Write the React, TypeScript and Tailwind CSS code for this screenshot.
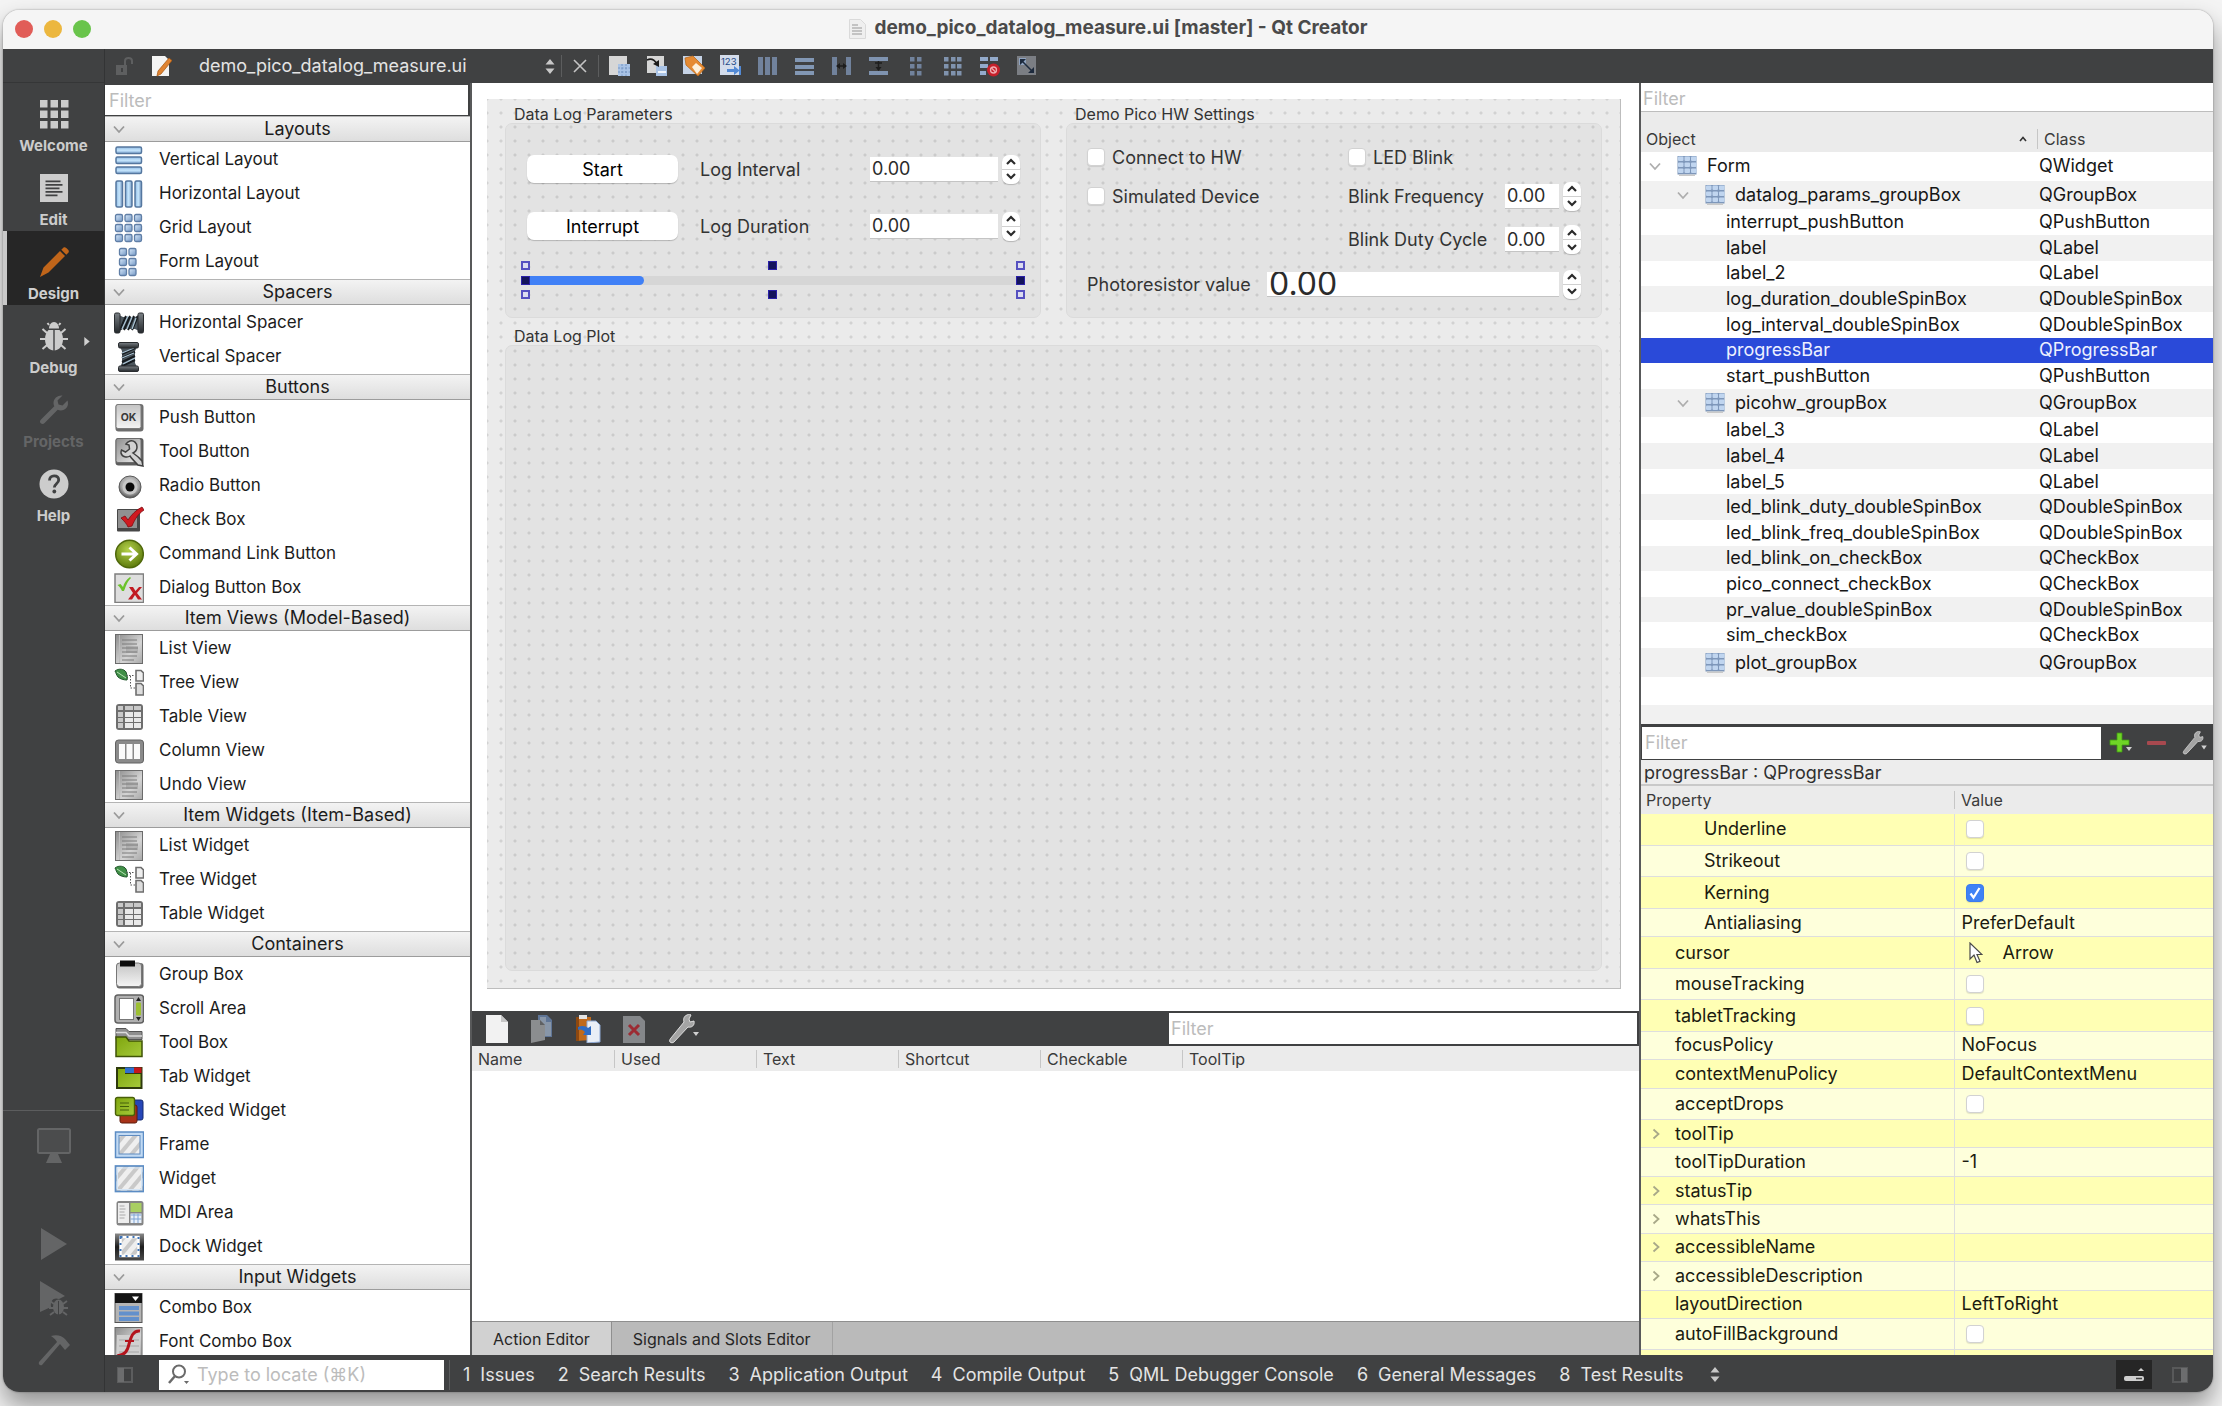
import React from "react";

/* ---------- shared gradients ---------- */

function Defs() {
  return (
    <svg width="0" height="0" className="absolute" aria-hidden="true">
      <defs>
        <linearGradient id="blueBar" x1="0" y1="0" x2="0" y2="1">
          <stop offset="0" stopColor="#8db8e2" />
          <stop offset="0.5" stopColor="#c6e6fd" />
          <stop offset="1" stopColor="#7fa6d0" />
        </linearGradient>
        <linearGradient id="blueCol" x1="0" y1="0" x2="1" y2="0">
          <stop offset="0" stopColor="#8db8e2" />
          <stop offset="0.5" stopColor="#c6e6fd" />
          <stop offset="1" stopColor="#7598c2" />
        </linearGradient>
        <linearGradient id="blueCell" x1="0" y1="0" x2="1" y2="1">
          <stop offset="0" stopColor="#d8e9fa" />
          <stop offset="1" stopColor="#7397c4" />
        </linearGradient>
        <linearGradient id="gray" x1="0" y1="0" x2="0" y2="1">
          <stop offset="0" stopColor="#c4c4c4" />
          <stop offset="1" stopColor="#f4f4f4" />
        </linearGradient>
        <linearGradient id="grayTool" x1="0" y1="0" x2="1" y2="1">
          <stop offset="0" stopColor="#8e8e8e" />
          <stop offset="1" stopColor="#f0f0f0" />
        </linearGradient>
        <linearGradient id="grayList" x1="0" y1="0" x2="1" y2="1">
          <stop offset="0" stopColor="#8c8c8c" />
          <stop offset="0.6" stopColor="#d4d4d4" />
          <stop offset="1" stopColor="#a8a8a8" />
        </linearGradient>
        <linearGradient id="dark" x1="0" y1="0" x2="0" y2="1">
          <stop offset="0" stopColor="#7a8085" />
          <stop offset="1" stopColor="#24282b" />
        </linearGradient>
        <linearGradient id="green" x1="0" y1="0" x2="1" y2="1">
          <stop offset="0" stopColor="#7fa60e" />
          <stop offset="1" stopColor="#a5c93a" />
        </linearGradient>
        <radialGradient id="greenBall" cx="0.45" cy="0.35" r="0.65">
          <stop offset="0" stopColor="#b4d24a" />
          <stop offset="1" stopColor="#5d7a0c" />
        </radialGradient>
        <radialGradient id="grayBall" cx="0.5" cy="0.4" r="0.6">
          <stop offset="0" stopColor="#e8e8e8" />
          <stop offset="0.7" stopColor="#a0a0a0" />
          <stop offset="1" stopColor="#4c4c4c" />
        </radialGradient>
        <linearGradient id="blackFade" x1="0" y1="0" x2="0" y2="1">
          <stop offset="0" stopColor="#8a8a8a" />
          <stop offset="0.5" stopColor="#1c1c1c" />
          <stop offset="1" stopColor="#4a4a4a" />
        </linearGradient>
        <pattern id="stripes" width="9" height="9" patternUnits="userSpaceOnUse" patternTransform="rotate(40)">
          <rect width="9" height="9" fill="#efefef" />
          <rect width="4" height="9" fill="#c9c9c9" />
        </pattern>
      </defs>
    </svg>
  );
}

const Svg30 = ({ children }: { children: React.ReactNode }) => (
  <svg viewBox="0 0 30 30" className="size-[30px] shrink-0" fill="none" aria-hidden="true">
    {children}
  </svg>
);

/* ---------- widget box icons ---------- */

const cells = (xs: number[], ys: number[], s: number) =>
  ys.flatMap((y) =>
    xs.map((x) => (
      <rect key={`${x}-${y}`} x={x} y={y} width={s} height={s} rx="1.5" fill="url(#blueCell)" stroke="#5f7ea6" strokeWidth="1.3" />
    )),
  );

const ListIcon = () => (
  <Svg30>
    <rect x="1.5" y="0.5" width="27" height="29" fill="url(#grayList)" stroke="#6b6b6b" />
    <path d="M5.5 1v28" stroke="#bdbdbd" />
    <path d="M8 6h15M8 10h15M8 14h16M8 18h15M8 22h15M8 26h12" stroke="#7a7a7a" strokeWidth="1" />
    <path d="M12 12h12v7H12z" fill="#7d7d7d" fillOpacity="0.35" />
  </Svg30>
);
const TreeIcon = () => (
  <Svg30>
    <path d="M1 3c4-3 9-2 11 1 1 3 2 6 1 8-3 0-7-1-9-3-1.500-2-2-4-3-6z" fill="#3f8f46" stroke="#20552a" />
    <path d="M3 4l9 6" stroke="#b7e3b4" />
    <path d="M12 7.500h9M16.500 8v12h5" stroke="#555" strokeDasharray="1.500 1.500" />
    <path d="M22 2.500h5l2.500 2.500v8H22z" fill="#eee" stroke="#6e6e6e" strokeWidth="1.600" />
    <path d="M22 15.500h5l2.500 2.500v9H22z" fill="#ddd" stroke="#6e6e6e" strokeWidth="1.600" />
  </Svg30>
);
const TableIcon = () => (
  <Svg30>
    <rect x="2" y="2" width="27" height="26" rx="3" fill="#6e6e6e" />
    <path d="M4 4h5v4H4zM11 4h8v4h-8zM20 4h7v4h-7z" fill="#c8c8c8" />
    <path d="M4 10h5v5H4zM4 16h5v4H4zM4 21h5v5H4z" fill="#c8c8c8" />
    <path d="M11 10h8v5h-8zM20 10h7v5h-7zM11 16h8v4h-8zM20 16h7v4h-7zM11 21h8v5h-8zM20 21h7v5h-7z" fill="#e9e9e9" />
  </Svg30>
);

const icons: Record<string, React.ReactElement> = {
  vlayout: (
    <Svg30>
      {[2, 12, 22].map((y) => (
        <rect key={y} x="2" y={y} width="25.500" height="6.500" rx="1.500" fill="url(#blueBar)" stroke="#55779f" strokeWidth="1.500" />
      ))}
    </Svg30>
  ),
  hlayout: (
    <Svg30>
      {[2, 11.5, 21].map((x) => (
        <rect key={x} x={x} y="2" width="6.500" height="26" rx="1.500" fill="url(#blueCol)" stroke="#55779f" strokeWidth="1.500" />
      ))}
    </Svg30>
  ),
  grid: <Svg30>{cells([1.5, 11, 20.5], [1.5, 11.5, 21.5], 7)}</Svg30>,
  form: <Svg30>{cells([5.5, 15], [1.5, 11.5, 21.5], 7)}</Svg30>,
  hspacer: (
    <Svg30>
      <path d="M5 7l4 2h12l4-2v16l-4-2H9l-4 2z" fill="#4b555c" />
      <path d="M6 22L12 8M10 22l6-14M14 22l6-14M18 22l6-14" stroke="#161b1f" strokeWidth="2" />
      <path d="M8 21l6-13M13 21l5-12M18 21l4-11" stroke="#a9c3d4" strokeWidth="1.300" />
      <rect x="0.500" y="5" width="5.500" height="20" rx="1.500" fill="url(#dark)" stroke="#2a2d30" />
      <rect x="24" y="5" width="5.500" height="20" rx="1.500" fill="url(#dark)" stroke="#2a2d30" />
    </Svg30>
  ),
  vspacer: (
    <Svg30>
      <path d="M6 5h17l-2 4v12l2 4H6l2-4V9z" fill="#4b555c" />
      <path d="M8 12l13-6M8 16l13-6M8 20l13-6M8 24l13-6" stroke="#161b1f" strokeWidth="2" />
      <path d="M8 11l12-5M8 16l12-5M9 22l12-6" stroke="#a9c3d4" strokeWidth="1.300" />
      <rect x="4.500" y="0.500" width="20" height="5.500" rx="1.500" fill="url(#dark)" stroke="#2a2d30" />
      <rect x="4.500" y="24" width="20" height="5.500" rx="1.500" fill="url(#dark)" stroke="#2a2d30" />
    </Svg30>
  ),
  push: (
    <Svg30>
      <rect x="1.500" y="1" width="28" height="27.500" rx="3" fill="#6d6d6d" />
      <rect x="2" y="1.500" width="25" height="24" rx="2" fill="url(#gray)" stroke="#7c7c7c" />
      <text x="14.500" y="17.500" textAnchor="middle" fontSize="10.500" fontWeight="700" fill="#3a3a3a" fontFamily="Inter, sans-serif">OK</text>
    </Svg30>
  ),
  tool: (
    <Svg30>
      <rect x="1.500" y="1" width="28" height="27.500" rx="3" fill="#5d5d5d" />
      <rect x="2" y="1.500" width="25" height="24" rx="2" fill="url(#grayTool)" stroke="#6c6c6c" />
      <path d="M16 4c4-1 7 2 7 6 0 3-2 5-4 6 3 2 6 4 9 8l1 5-5-1c-3-3-6-6-8-9-3 2-8 1-9-3 0-1 0-2 .5-3l4 2 4-3-.5-4-3-1c1-1.500 2-2.500 4-3z" fill="#d2d2d2" stroke="#404040" strokeWidth="1.500" />
    </Svg30>
  ),
  radio: (
    <Svg30>
      <circle cx="16" cy="16" r="11" fill="url(#grayBall)" stroke="#5a5a5a" />
      <circle cx="16" cy="16" r="7.500" fill="#c6c6c6" />
      <circle cx="16" cy="16" r="4.500" fill="#0a0a0a" />
    </Svg30>
  ),
  check: (
    <Svg30>
      <rect x="3" y="4" width="23" height="22.500" rx="1" fill="#474747" />
      <rect x="4" y="5" width="19" height="18" fill="#909090" />
      <path d="M7 13l4-2 3 4C17 10 22 5 28 2l2 3c-6 4-9 9-12 16l-4 1c-1-3-4-6-7-9z" fill="#cf1a20" stroke="#7d0a0f" strokeWidth="0.800" />
    </Svg30>
  ),
  command: (
    <Svg30>
      <circle cx="15.500" cy="15" r="13.800" fill="url(#greenBall)" stroke="#4f680b" strokeWidth="1.500" />
      <path d="M7.500 15h14M15.500 8.500l7 6.500-7 6.500" stroke="#fff" strokeWidth="3" />
    </Svg30>
  ),
  dialog: (
    <Svg30>
      <rect x="1" y="1" width="28.500" height="28.500" fill="#dedede" stroke="#7f7f7f" strokeWidth="1.500" />
      <path d="M3.500 12l3-1 2.500 3c1-4 3-7 7-10l1 1c-4 4-5 8-7 13H8c-1-2-2-4-4.500-6z" fill="#6cc22c" />
      <path d="M15 14h4l2.500 4L25 14h3l-5 6 5 6.500h-4L21 22l-3 4.500h-4l5-6.500z" fill="#c11a22" />
    </Svg30>
  ),
  list: <ListIcon />,
  tree: <TreeIcon />,
  table: <TableIcon />,
  column: (
    <Svg30>
      <rect x="1.500" y="4" width="28" height="23" rx="3" fill="#8a8a8a" stroke="#626262" />
      <path d="M5 8h6v15H5zM12.500 8h6v15h-6zM20 8h6v15h-6z" fill="#fbfbfb" />
    </Svg30>
  ),
  group: (
    <Svg30>
      <rect x="2.500" y="3" width="27" height="25.500" rx="3" fill="#6b6b6b" />
      <rect x="2.500" y="3" width="25" height="23.500" rx="3" fill="url(#gray)" stroke="#777" />
      <rect x="6" y="0.500" width="15" height="6" fill="#0c0c0c" />
    </Svg30>
  ),
  scroll: (
    <Svg30>
      <rect x="1" y="1" width="28.500" height="28" rx="3" fill="#b0b0b0" stroke="#606060" strokeWidth="1.500" />
      <rect x="5.500" y="4.500" width="14" height="21" fill="#fff" stroke="#777" />
      <rect x="22" y="8.500" width="5" height="13" rx="1" fill="#9dc032" />
      <path d="M24.500 3l2.500 4h-5zM24.500 27l2.500-4h-5z" fill="#222" />
    </Svg30>
  ),
  toolbox: (
    <Svg30>
      <path d="M2 0.500h10l3 3h13v8H2z" fill="#8f8f8f" stroke="#555" />
      <path d="M2 4.500h10l3 3.500h13" stroke="#dcdcdc" strokeWidth="1.500" />
      <path d="M2 9h10l3 4h13v15.500H2z" fill="url(#green)" stroke="#3f5307" strokeWidth="1.500" />
    </Svg30>
  ),
  tab: (
    <Svg30>
      <rect x="2" y="5" width="26.500" height="22" fill="#2e3a0c" />
      <rect x="11" y="5.500" width="9" height="5.500" fill="#2f6fcf" />
      <rect x="20" y="5.500" width="7.500" height="5.500" fill="#c4161c" />
      <path d="M4 7h7v5h15.500v13H4z" fill="url(#green)" />
    </Svg30>
  ),
  stacked: (
    <Svg30>
      <rect x="13" y="4" width="16" height="20" rx="2" fill="#2646b8" stroke="#152a70" />
      <rect x="6" y="9" width="17" height="18" rx="2" fill="#a83218" stroke="#5e1a0b" />
      <rect x="1.500" y="1.500" width="19" height="18" rx="2" fill="url(#green)" stroke="#485f08" strokeWidth="1.400" />
      <path d="M6 7h9M6 10.500h9M6 14h9" stroke="#44600a" />
    </Svg30>
  ),
  frame: (
    <Svg30>
      <rect x="1.500" y="2" width="28" height="25.500" fill="#c2daf3" stroke="#5b8cc4" strokeWidth="1.500" />
      <rect x="5" y="5.500" width="21" height="18.500" fill="url(#stripes)" stroke="#5f8bc0" />
    </Svg30>
  ),
  widget: (
    <Svg30>
      <rect x="1.500" y="2" width="28" height="25.500" fill="url(#stripes)" stroke="#5b8cc4" strokeWidth="1.700" />
      <rect x="3.500" y="4" width="24" height="21.500" stroke="#d6e6f6" />
    </Svg30>
  ),
  mdi: (
    <Svg30>
      <rect x="2.500" y="3" width="27" height="24.500" rx="2.500" fill="#858585" />
      <rect x="4" y="5" width="11" height="20" fill="#ededed" />
      <path d="M5.500 8h5M5.500 11h6M5.500 14h5M5.500 17h6M5.500 20h5" stroke="#aaa" />
      <rect x="16.500" y="5" width="11" height="9" fill="#a9cf62" />
      <rect x="16.500" y="15.500" width="11" height="9.500" fill="#e8f0fa" />
      <path d="M16.500 17h11M20 15.500V25M24 15.500V25M16.500 21h11" stroke="#7ea4d4" />
    </Svg30>
  ),
  dock: (
    <Svg30>
      <rect x="1" y="1.500" width="29" height="27" fill="url(#blackFade)" />
      <rect x="6.500" y="5" width="18" height="19" fill="url(#stripes)" stroke="#fff" strokeWidth="2.500" />
      <rect x="6.500" y="5" width="18" height="19" stroke="#3f74b8" strokeWidth="2" strokeDasharray="2 4" />
    </Svg30>
  ),
  combo: (
    <Svg30>
      <rect x="1" y="0.500" width="27" height="29" fill="#b4b4b4" stroke="#555" />
      <rect x="1" y="0.500" width="27" height="9.500" fill="#141414" />
      <path d="M18 3.500h7l-3.500 4.500z" fill="#fff" />
      <path d="M5 13h20v4H5zM5 18.500h20v4H5zM5 24h20v4H5z" fill="#6290cc" />
    </Svg30>
  ),
  fontcombo: (
    <Svg30>
      <rect x="1" y="0.500" width="27" height="31" fill="url(#grayList)" stroke="#666" />
      <path d="M3 8h23v22H3z" fill="#d0d0d0" />
      <path d="M5 13h20M5 19h20M5 25h20" stroke="#a6a6a6" />
      <path d="M26 4c-7-1-9 6-11 13-1.500 7-4 11-12 12" stroke="#b3141d" strokeWidth="3" />
      <path d="M11 14h9" stroke="#b3141d" strokeWidth="2" />
    </Svg30>
  ),
};

const categories: { title: string; items: [string, string][] }[] = [
  { title: "Layouts", items: [["vlayout", "Vertical Layout"], ["hlayout", "Horizontal Layout"], ["grid", "Grid Layout"], ["form", "Form Layout"]] },
  { title: "Spacers", items: [["hspacer", "Horizontal Spacer"], ["vspacer", "Vertical Spacer"]] },
  {
    title: "Buttons",
    items: [["push", "Push Button"], ["tool", "Tool Button"], ["radio", "Radio Button"], ["check", "Check Box"], ["command", "Command Link Button"], ["dialog", "Dialog Button Box"]],
  },
  { title: "Item Views (Model-Based)", items: [["list", "List View"], ["tree", "Tree View"], ["table", "Table View"], ["column", "Column View"], ["list", "Undo View"]] },
  { title: "Item Widgets (Item-Based)", items: [["list", "List Widget"], ["tree", "Tree Widget"], ["table", "Table Widget"]] },
  {
    title: "Containers",
    items: [
      ["group", "Group Box"], ["scroll", "Scroll Area"], ["toolbox", "Tool Box"], ["tab", "Tab Widget"], ["stacked", "Stacked Widget"],
      ["frame", "Frame"], ["widget", "Widget"], ["mdi", "MDI Area"], ["dock", "Dock Widget"],
    ],
  },
  { title: "Input Widgets", items: [["combo", "Combo Box"], ["fontcombo", "Font Combo Box"]] },
];

const Chevron = ({ right = false, color = "#a0a0a0" }: { right?: boolean; color?: string }) => (
  <svg viewBox="0 0 12 12" className="size-3 shrink-0" fill="none" stroke={color} strokeWidth="1.8" aria-hidden="true">
    <path d={right ? "M3.500 1.500l5 4.500-5 4.500" : "M1 3.500l5 5.500 5-5.500"} />
  </svg>
);

function WidgetBox() {
  return (
    <aside className="flex min-h-0 w-[367px] shrink-0 flex-col border-r-2 border-[#58595a] bg-white">
      <div className="shrink-0 border-b border-r-2 border-t-2 border-[#404142] bg-white pl-1">
        <input aria-label="Filter widgets" placeholder="Filter" className="h-[30px] w-full text-[18px] outline-none placeholder:text-[#bcbcbc]" />
      </div>
      <div className="min-h-0 flex-1 overflow-hidden">
        {categories.map((c) => (
          <section key={c.title}>
            <button className="flex h-[26px] w-full items-center border-b border-t border-b-[#9c9c9c] border-t-[#b4b4b4] bg-linear-to-b from-[#f3f3f3] to-[#dedede] pl-2 text-[18px] leading-none text-[#1c1c1c]">
              <Chevron color="#9a9a9a" />
              <span className="flex-1 text-center">{c.title}</span>
            </button>
            <ul className="pt-px">
              {c.items.map(([icon, label]) => (
                <li key={label}>
                  <button className="flex h-[34px] w-full items-center gap-[15px] pl-[9px] text-left text-[17px] text-[#1c1c1c]">
                    {icons[icon]}
                    {label}
                  </button>
                </li>
              ))}
            </ul>
          </section>
        ))}
      </div>
    </aside>
  );
}

/* ---------- mode selector ---------- */

const modeIcons: Record<string, React.ReactElement> = {
  Welcome: (
    <g>
      {[0, 10.5, 21].map((y) => [0, 10.5, 21].map((x) => <rect key={`${x}${y}`} x={x} y={y} width="7.500" height="7.500" />))}
    </g>
  ),
  Edit: (
    <path fillRule="evenodd" d="M0 0h28v28H0zM5.500 6.500v1.700h15V6.500zM5.500 10v1.700h17V10zM5.500 13.500v1.700h14v-1.700zM5.500 17v1.700h17V17zM5.500 20.500v1.700h12v-1.700z" />
  ),
  Design: (
    <path d="M20 3l5 5L8.500 24.500 0 29l3.500-9.500zM21.300 1.700l2-2c1-.8 2-.6 3 .3l1.800 1.800c.9 1 1 2 .2 3l-2 2z" />
  ),
  Debug: (
    <g>
      <path d="M9 6.500C9 3 11 0 14 0s5 3 5 6.500z" />
      <path d="M13.300 8v20.500C8 28 5 23 5 17c0-4 1.500-7 3.500-9zM14.700 8v20.500c5.300-.5 8.300-5.500 8.300-11.500 0-4-1.500-7-3.500-9z" />
      <path d="M7 11L2.500 7M21 11l4.500-4M5.500 17H0M22.500 17H28M7 23l-4.500 4M21 23l4.500 4M9 3L7.500 1M19 3l1.500-2" stroke="currentColor" strokeWidth="2" />
    </g>
  ),
  Projects: (
    <path d="M27.500 4.500l-5 5-4-1-1-4 5-5C18-1 13.500 2 13.500 7c0 1.200.3 2.300.8 3.300L1 23.500c-1.300 1.300-1.300 2.700-.2 3.800 1.200 1.200 2.600 1 3.800-.2L17.700 13.700C22.500 16 28 12.500 28 7.500c0-1-.1-2-.5-3z" />
  ),
  Help: (
    <g>
      <circle cx="14" cy="14" r="14.500" />
      <path d="M9.500 10.500c0-3 2-4.700 4.600-4.700 2.700 0 4.600 1.600 4.600 4.200 0 3.600-4.400 3.900-4.400 7.500" stroke="#404142" strokeWidth="2.800" fill="none" />
      <circle cx="14.300" cy="21.500" r="1.900" fill="#404142" />
    </g>
  ),
};

function ModeBar() {
  return (
    <nav className="flex w-[102px] shrink-0 flex-col border-r border-[#333435] bg-[#404142]">
      <div className="h-[34px] shrink-0 border-b border-[#353637]" />
      {Object.keys(modeIcons).map((m) => {
        const active = m === "Design";
        const off = m === "Projects";
        return (
          <button
            key={m}
            className={
              "relative flex h-[74px] shrink-0 flex-col items-center pt-[16px] text-[15px] font-bold leading-[18px] " +
              (active ? "border-l-4 border-[#c9c9c9] bg-[#262626] pr-1 text-[#cfcfcf]" : off ? "text-[#646566]" : "text-[#cccccc]")
            }
          >
            <svg viewBox="-1 -1 30 30" fill="currentColor" className={active ? "mb-2 size-[30px] text-[#c0651a]" : "mb-2 size-[30px]"} aria-hidden="true">
              {modeIcons[m]}
            </svg>
            {m}
            {m === "Debug" && (
              <svg viewBox="0 0 6 10" className="absolute right-[14px] top-8 h-[9px] w-[6px]" fill="#d0d0d0" aria-hidden="true">
                <path d="M0 0l6 5-6 5z" />
              </svg>
            )}
          </button>
        );
      })}
      <div className="flex-1" />
      <div className="flex h-[282px] shrink-0 flex-col items-center border-t border-[#5c5d5e] pt-[17px] text-[#646566]">
        <button aria-label="Select kit">
          <svg viewBox="0 0 34 35" className="h-[35px] w-[34px]" fill="none" aria-hidden="true">
            <rect x="1" y="1" width="32" height="24" rx="1.500" stroke="currentColor" strokeWidth="2" fill="#4b4c4d" />
            <path d="M13 26h8l4 9H9z" fill="currentColor" />
          </svg>
        </button>
        <button aria-label="Run" className="mt-[65px]">
          <svg viewBox="0 0 26 32" className="h-8 w-[26px]" fill="currentColor" aria-hidden="true">
            <path d="M0 0l26 16L0 32z" />
          </svg>
        </button>
        <button aria-label="Start debugging" className="mt-[21px]">
          <svg viewBox="0 0 28 35" className="h-[35px] w-7" fill="currentColor" aria-hidden="true">
            <path d="M0 0l25 15-6 3c-5-2-9 1-8 8L0 31z" />
            <ellipse cx="18.500" cy="26" rx="5.500" ry="7.500" />
            <path d="M18.500 20v14" stroke="#404142" />
            <path d="M10 20l4 3M27 20l-4 3M9 27h5M23 27h5M10 34l4-3M27 34l-4-3" stroke="currentColor" strokeWidth="1.800" />
          </svg>
        </button>
        <button aria-label="Build" className="mt-[18px]">
          <svg viewBox="0 0 32 32" className="size-8" fill="currentColor" aria-hidden="true">
            <path d="M13 2c6-2 11 0 14 3l5 6-5 5-5-6L4 31c-2 1-4-1-3-3L19 8c-1-2-3-4-6-6z" />
          </svg>
        </button>
      </div>
    </nav>
  );
}

/* ---------- top toolbar ---------- */

const Updown = () => (
  <svg viewBox="0 0 10 15" className="h-[15px] w-[10px]" fill="#c8c8c8" aria-hidden="true">
    <path d="M5 0l4.500 5.500h-9zM5 15l4.500-5.500h-9z" />
  </svg>
);

const squares = (xs: number[], ys: number[], w: number, h: number) =>
  ys.flatMap((y) => xs.map((x) => <rect key={`${x}-${y}`} x={x} y={y} width={w} height={h} />));

const toolIcons: [string, React.ReactElement][] = [
  [
    "Edit Widgets",
    <g key="a">
      <rect x="0" y="1" width="18" height="19" fill="#d6d6d6" />
      <rect x="9" y="9" width="12" height="12" fill="#a9c3e6" />
      <path d="M13 9v12M17 9v12M9 13h12M9 17h12" stroke="#7796c2" strokeDasharray="2 1.500" />
    </g>,
  ],
  [
    "Edit Signals/Slots",
    <g key="b">
      <rect x="1" y="1" width="17" height="17" fill="#d6d6d6" />
      <rect x="10" y="11" width="11" height="10" fill="#a9c3e6" />
      <path d="M12 17h8" stroke="#f0f5fc" strokeWidth="2" />
      <path d="M1 5c4-2 7-1 10 4" stroke="#1c1c1c" strokeWidth="1.500" />
      <path d="M13 5v7l-6-3z" fill="#1c1c1c" />
    </g>,
  ],
  [
    "Edit Buddies",
    <g key="c">
      <rect x="0" y="1" width="19" height="18" fill="#c6d3e6" />
      <path d="M2 3l8-2 12 12-7 8L3 10z" fill="#e58a33" stroke="#b8691c" strokeWidth="0.800" />
      <path d="M9 12l4-4 6 5-5 6z" fill="#fdf0dc" />
    </g>,
  ],
  [
    "Edit Tab Order",
    <g key="d">
      <rect x="0" y="0" width="19" height="20" fill="#d3dceb" />
      <text x="1" y="10" fontSize="9.500" fill="#254a86" fontFamily="Inter, sans-serif">123</text>
      <path d="M7 14h7v-3l5 4v-4h2v9h-2v-4l-5 4v-3H7z" fill="#5289d4" />
    </g>,
  ],
  ["Lay Out Horizontally", <g key="e" fill="#71829c">{squares([1, 8, 15], [2], 5, 18)}</g>],
  ["Lay Out Vertically", <g key="f" fill="#8297b4">{squares([1], [3, 10, 16], 19, 4)}</g>],
  [
    "Horizontal Splitter",
    <g key="g">
      <path d="M1 2h5v18H1zM15 2h5v18h-5z" fill="#71829c" />
      <path d="M6 11h9" stroke="#1d1d1d" strokeWidth="1.500" />
      <path d="M5 11l4-3v6zM16 11l-4-3v6z" fill="#1d1d1d" />
    </g>,
  ],
  [
    "Vertical Splitter",
    <g key="h">
      <path d="M1 2h19v4H1zM1 16h19v4H1z" fill="#7f93b0" />
      <path d="M10.500 6v9M7 8h7" stroke="#1d1d1d" strokeWidth="1.500" />
      <path d="M10.500 16l-3-4h6z" fill="#1d1d1d" />
    </g>,
  ],
  ["Form Layout", <g key="i" fill="#71829c">{squares([5, 12], [2, 9, 16], 4.5, 4.5)}</g>],
  ["Grid Layout", <g key="j" fill="#8093ae">{squares([2, 9, 15], [2, 9, 16], 4.5, 4.5)}</g>],
  [
    "Break Layout",
    <g key="k">
      <path d="M1 2h8v4H1zM11 2h8v4h-8zM1 9h8v4H1zM1 16h6v4H1z" fill="#93aacb" />
      <circle cx="14.500" cy="15" r="6.500" fill="#c5202b" />
      <circle cx="14.500" cy="15" r="3" stroke="#f0aab0" strokeWidth="1.300" />
      <path d="M12.500 13l4 4" stroke="#f0aab0" strokeWidth="1.300" />
    </g>,
  ],
  [
    "Adjust Size",
    <g key="l">
      <rect x="1" y="1" width="19" height="19" fill="#7b7e84" />
      <rect x="3" y="3" width="7" height="7" fill="#8fa3c0" />
      <path d="M6 6l10 10" stroke="#1d2a3d" strokeWidth="1.500" />
      <path d="M4 4h6l-6 6zM18 18h-6l6-6z" fill="#1d2a3d" />
    </g>,
  ],
];

function TopToolbar() {
  return (
    <div className="flex h-[34px] shrink-0 items-center bg-[#404142]">
      <div className="flex w-[456px] shrink-0 items-center pl-[11px]">
        <svg viewBox="0 0 18 20" className="h-5 w-[18px]" fill="none" aria-hidden="true">
          <rect x="0" y="9" width="11" height="10" fill="#5e5f60" />
          <path d="M9 9V5c0-4 7-4 7 0v3" stroke="#5e5f60" strokeWidth="2" />
          <rect x="5" y="12" width="2" height="4" fill="#404142" />
        </svg>
        <svg viewBox="0 0 20 22" className="ml-[18px] h-[22px] w-5" aria-hidden="true">
          <path d="M0 1h13l4 4v16H0z" fill="#f4f4f4" />
          <path d="M17 3l3 2.500L9 19l-4 2 1-5z" fill="#e08432" stroke="#a3540f" strokeWidth="0.700" />
        </svg>
        <button className="ml-[27px] flex flex-1 items-center justify-between pr-1.5 text-[18px] leading-6 text-[#e4e4e4]">
          demo_pico_datalog_measure.ui
          <Updown />
        </button>
      </div>
      <div className="h-[22px] w-px bg-[#5c5d5e]" />
      <button aria-label="Close document" className="mx-[11px]">
        <svg viewBox="0 0 14 14" className="size-[14px]" stroke="#c4c4c4" strokeWidth="1.600" aria-hidden="true">
          <path d="M1 1l12 12M13 1L1 13" />
        </svg>
      </button>
      <div className="h-[22px] w-px bg-[#5c5d5e]" />
      <div className="ml-[10px] flex gap-[15px]">
        {toolIcons.map(([name, art]) => (
          <button key={name} aria-label={name}>
            <svg viewBox="0 0 22 22" className="size-[22px]" fill="none" aria-hidden="true">
              {art}
            </svg>
          </button>
        ))}
      </div>
    </div>
  );
}

/* ---------- form canvas ---------- */

function Stepper({ label }: { label: string }) {
  return (
    <span className="flex h-[29px] w-[18px] shrink-0 flex-col divide-y divide-[#d0d0d0] rounded-[7px] bg-white shadow-[0_1px_1px_rgba(0,0,0,0.2)]">
      {["up", "down"].map((d) => (
        <button key={d} aria-label={`${label} ${d}`} className="flex flex-1 items-center justify-center">
          <svg viewBox="0 0 10 7" className="h-[7px] w-[10px]" fill="none" stroke="#2b2b2b" strokeWidth="2.200" aria-hidden="true">
            <path d={d === "up" ? "M1 6l4-4 4 4" : "M1 1l4 4 4-4"} />
          </svg>
        </button>
      ))}
    </span>
  );
}

function Spin({ id, label, big = false }: { id: string; label: string; big?: boolean }) {
  return (
    <span className="flex min-w-0 flex-1 items-center gap-1">
      <input
        id={id}
        defaultValue="0.00"
        className={
          "h-[25px] w-0 min-w-0 flex-1 border-b border-[#c4c4c4] bg-white pl-[2px] leading-none text-[#2b2b2b] outline-none " + (big ? "text-[32px]" : "text-[18px]")
        }
      />
      <Stepper label={label} />
    </span>
  );
}

function Check({ id, label, checked = false }: { id?: string; label?: string; checked?: boolean }) {
  return (
    <span className="relative inline-flex size-[18px] shrink-0 align-middle">
      <input
        id={id}
        aria-label={label}
        type="checkbox"
        defaultChecked={checked}
        className="size-[18px] appearance-none rounded-[4px] border border-[#d2d2d2] bg-white shadow-[0_1px_1px_rgba(0,0,0,0.1)] checked:border-[#3a7bf0] checked:bg-[#3f82f5]"
      />
      {checked && (
        <svg viewBox="0 0 18 18" className="pointer-events-none absolute inset-0 size-[18px]" fill="none" stroke="#fff" strokeWidth="2.200" aria-hidden="true">
          <path d="M4.500 9.500l3 4L13.500 4" />
        </svg>
      )}
    </span>
  );
}

const groupBox = "border border-[#dbdbdb] bg-black/[0.03] rounded-[7px]";
const groupTitle = "items-end pl-[9px] text-[16px] leading-[18px] text-[#333]";
const hollow = "absolute size-[9px] border-2 border-[#5550c0] bg-[#dcdcf0]";
const solid = "absolute size-[9px] border border-[#2a20a8] bg-[#14145c]";

function FormCanvas() {
  return (
    <div className="flex min-h-0 flex-1 bg-white pb-[22px] pl-[15px] pr-[18px] pt-4">
      <div className="flex flex-1 flex-col border-b border-r border-[#bdbdbd] bg-[#ebebeb] bg-[radial-gradient(circle_at_center,#d2d2d2_1px,transparent_2px)] bg-[size:14px_14px] bg-position-[7px_7px] pb-[17px] pl-[18px] pr-[18px]">
        <div className="grid grid-cols-2 gap-x-[25px]">
          <section className="flex flex-col">
            <h3 className={"flex h-6 " + groupTitle}>Data Log Parameters</h3>
            <div className={groupBox + " flex h-[195px] flex-col px-[15px] pt-[31px]"}>
              <div className="grid grid-cols-[151px_1fr_150px] items-center gap-x-[22px] gap-y-[29px] pl-[6px] pr-[5px] text-[18px] text-[#333]">
                <button className="h-7 rounded-[7px] bg-white text-black shadow-[0_1px_1px_rgba(0,0,0,0.2)]">Start</button>
                <label htmlFor="log-interval">Log Interval</label>
                <span className="flex h-7 items-center"><Spin id="log-interval" label="Log Interval" /></span>
                <button className="h-7 rounded-[7px] bg-white text-black shadow-[0_1px_1px_rgba(0,0,0,0.2)]">Interrupt</button>
                <label htmlFor="log-duration">Log Duration</label>
                <span className="flex h-7 items-center"><Spin id="log-duration" label="Log Duration" /></span>
              </div>
              <div className="relative mt-[21px] flex h-[38px] items-center">
                <div role="progressbar" aria-label="progressBar" aria-valuenow={24} className="mx-1 h-[9px] flex-1 rounded-full bg-[#d6d6d6]">
                  <div className="h-full w-[24%] rounded-full bg-[#4080f6]" />
                </div>
                <i className={hollow + " left-0 top-0"} />
                <i className={hollow + " right-0 top-0"} />
                <i className={hollow + " bottom-0 left-0"} />
                <i className={hollow + " bottom-0 right-0"} />
                <i className={solid + " left-0 top-[15px]"} />
                <i className={solid + " right-0 top-[15px]"} />
                <i className={solid + " left-1/2 top-0 -ml-[5px]"} />
                <i className={solid + " bottom-0 left-1/2 -ml-[5px]"} />
              </div>
            </div>
          </section>
          <section className="flex flex-col">
            <h3 className={"flex h-6 " + groupTitle}>Demo Pico HW Settings</h3>
            <div className={groupBox + " grid h-[195px] grid-cols-[1fr_157px_76px] grid-rows-[36px_42px_45px_44px] items-center px-5 pt-[15px] text-[18px] text-[#333]"}>
              <span className="flex items-center gap-[7px]">
                <Check id="connect" /><label htmlFor="connect">Connect to HW</label>
              </span>
              <span className="col-span-2 flex items-center gap-[7px]">
                <Check id="led" /><label htmlFor="led">LED Blink</label>
              </span>
              <span className="flex items-center gap-[7px]">
                <Check id="sim" /><label htmlFor="sim">Simulated Device</label>
              </span>
              <label htmlFor="freq">Blink Frequency</label>
              <Spin id="freq" label="Blink Frequency" />
              <label htmlFor="duty" className="col-start-2">Blink Duty Cycle</label>
              <Spin id="duty" label="Blink Duty Cycle" />
              <span className="col-span-3 flex items-center">
                <label htmlFor="photo" className="w-[180px]">Photoresistor value</label>
                <Spin id="photo" label="Photoresistor value" big />
              </span>
            </div>
          </section>
        </div>
        <section className="flex flex-1 flex-col">
          <h3 className={"flex h-[27px] " + groupTitle}>Data Log Plot</h3>
          <div className={groupBox + " flex-1"} />
        </section>
      </div>
    </div>
  );
}

/* ---------- action editor ---------- */

const wrench = "M20 1c2-1 3-1 4 0l-2 4 1 3 4-1c1 4-2 7-6 6L7 28c-1 1-3 1-4 0s0-3 1-4L17 8c-1-3 0-6 3-7z";

function ActionEditor() {
  return (
    <div className="flex h-[344px] shrink-0 flex-col">
      <div className="flex h-[35px] items-center bg-[#404142] pl-[13px]">
        <div className="flex flex-1 items-center gap-[21px]">
          <button aria-label="New action">
            <svg viewBox="0 0 24 28" className="h-7 w-6" aria-hidden="true">
              <path d="M1 0h15l7 7v21H1z" fill="#f2f2f2" /><path d="M16 0v7h7z" fill="#c6c6c6" />
            </svg>
          </button>
          <button aria-label="Copy">
            <svg viewBox="0 0 24 28" className="h-7 w-6" aria-hidden="true">
              <path d="M8 0h9l5 5v17H8z" fill="#5f7596" /><path d="M10 2h6v5h5v14H10z" fill="#8896a8" />
              <path d="M1 5h9l5 5v15L1 28z" fill="#8b8d8f" /><path d="M10 5v5h5z" fill="#5f6163" />
            </svg>
          </button>
          <button aria-label="Paste">
            <svg viewBox="0 0 26 28" className="h-7 w-[26px]" aria-hidden="true">
              <path d="M1 2h15v23l-15 1z" fill="#c06a1c" /><path d="M1 2h3v24H1z" fill="#8d4810" />
              <rect x="4" y="0" width="8" height="4" fill="#e4e4e4" />
              <path d="M12 6h9l4 4v17l-13 1z" fill="#e9eef6" stroke="#8ea9d4" />
              <path d="M3 12c4-2 8-1 10 1l3-2v9H8l2-3c-2-2-4-3-7-2z" fill="#2f6cc4" />
            </svg>
          </button>
          <button aria-label="Delete">
            <svg viewBox="0 0 24 28" className="h-7 w-6" aria-hidden="true">
              <path d="M1 1h17l5 5v22H1z" fill="#85878a" /><path d="M7 10l10 10M17 10L7 20" stroke="#9c2b33" strokeWidth="3" />
            </svg>
          </button>
          <button aria-label="Configure">
            <svg viewBox="0 0 32 30" className="h-[30px] w-8" aria-hidden="true">
              <path d={wrench} fill="#a4a4a4" stroke="#e6e6e6" strokeWidth="0.900" />
              <path d="M26 18h6l-3 4z" fill="#d0d0d0" />
            </svg>
          </button>
        </div>
        <input aria-label="Filter actions" placeholder="Filter" className="mr-0.5 h-[31px] w-[468px] bg-white pl-[2px] text-[18px] outline-none placeholder:text-[#bcbcbc]" />
      </div>
      <table className="w-full border-collapse bg-[#ebebeb]">
        <thead>
          <tr className="h-[25px] text-left text-[16px] text-[#3a3a3a]">
            {["Name", "Used", "Text", "Shortcut", "Checkable", "ToolTip"].map((h, i) => (
              <th key={h} className={"p-0 font-normal " + (i < 5 ? "w-[142px]" : "")}>
                <div className={"h-[18px] pl-[6px] leading-[18px] " + (i ? "border-l border-[#c6c6c6]" : "")}>{h}</div>
              </th>
            ))}
          </tr>
        </thead>
      </table>
      <div className="flex-1 bg-white" />
      <div role="tablist" className="flex h-[34px] shrink-0 border-t border-[#8f8f8f] bg-[#bababa] text-[16px] text-[#262626]">
        <button role="tab" aria-selected="true" className="border-r border-[#8f8f8f] bg-[#d1d1d1] px-[21px]">Action Editor</button>
        <button role="tab" aria-selected="false" className="border-r border-[#a2a2a2] px-[21px]">Signals and Slots Editor</button>
      </div>
    </div>
  );
}

/* ---------- object inspector ---------- */

const treeRows: [string, string, number, boolean][] = [
  ["Form", "QWidget", 0, true],
  ["datalog_params_groupBox", "QGroupBox", 1, true],
  ["interrupt_pushButton", "QPushButton", 2, false],
  ["label", "QLabel", 2, false],
  ["label_2", "QLabel", 2, false],
  ["log_duration_doubleSpinBox", "QDoubleSpinBox", 2, false],
  ["log_interval_doubleSpinBox", "QDoubleSpinBox", 2, false],
  ["progressBar", "QProgressBar", 2, false],
  ["start_pushButton", "QPushButton", 2, false],
  ["picohw_groupBox", "QGroupBox", 1, true],
  ["label_3", "QLabel", 2, false],
  ["label_4", "QLabel", 2, false],
  ["label_5", "QLabel", 2, false],
  ["led_blink_duty_doubleSpinBox", "QDoubleSpinBox", 2, false],
  ["led_blink_freq_doubleSpinBox", "QDoubleSpinBox", 2, false],
  ["led_blink_on_checkBox", "QCheckBox", 2, false],
  ["pico_connect_checkBox", "QCheckBox", 2, false],
  ["pr_value_doubleSpinBox", "QDoubleSpinBox", 2, false],
  ["sim_checkBox", "QCheckBox", 2, false],
  ["plot_groupBox", "QGroupBox", 1, false],
];

const LayoutGlyph = () => (
  <svg viewBox="0 0 20 20" className="size-5 shrink-0" aria-hidden="true">
    <rect x="0.500" y="0" width="19" height="18.500" fill="#7e97ba" />
    <rect x="2" y="18.500" width="16" height="1.500" fill="#c9c9c9" />
    {[0.5, 6.5, 12.5].map((y) => [1, 7.5, 14].map((x) => <rect key={`${x}${y}`} x={x} y={y} width="5.500" height="4.500" rx="1" fill="#c0d5ef" />))}
  </svg>
);

function ObjectInspector() {
  return (
    <section className="flex h-[641px] shrink-0 flex-col overflow-hidden bg-white">
      <input aria-label="Filter objects" placeholder="Filter" className="h-[29px] w-full shrink-0 border-b border-[#bdbdbd] pl-[2px] pt-[3px] text-[18px] outline-none placeholder:text-[#bcbcbc]" />
      <table className="h-[565px] w-full shrink-0 border-collapse text-[18px] leading-5 text-[#161616]">
        <thead>
          <tr className="h-10 bg-[#ebebeb] text-left text-[16px] text-[#3a3a3a]">
            <th className="p-0 pb-[3px] align-bottom font-normal">
              <div className="flex items-center justify-between border-r border-[#c6c6c6] pl-[5px] pr-[10px]">
                Object
                <svg viewBox="0 0 8 6" className="h-[6px] w-2" fill="none" stroke="#333" strokeWidth="1.600" aria-hidden="true"><path d="M1 5l3-3.500L7 5" /></svg>
              </div>
            </th>
            <th className="w-[175px] p-0 pb-[3px] pl-[6px] align-bottom font-normal">Class</th>
          </tr>
        </thead>
        <tbody>
          {treeRows.map(([name, cls, depth, open], i) => {
            const tall = depth < 2;
            return (
              <tr
                key={name}
                className={(tall ? "h-[28px] " : "h-[25px] ") + (name === "progressBar" ? "bg-[#2a4ad9] text-[#eef1ff]" : i % 2 ? "bg-[#f1f1f1]" : "bg-white")}
              >
                <td className={"p-0 " + (depth === 0 ? "pl-2" : depth === 1 ? "pl-9" : "pl-[85px]")}>
                  <span className="flex items-center">
                    {tall && (
                      <>
                        {open ? <Chevron color="#aeaeae" /> : <span className="w-3" />}
                        <span className="ml-4 mr-[10px] flex"><LayoutGlyph /></span>
                      </>
                    )}
                    {name}
                  </span>
                </td>
                <td className="p-0 pl-px">{cls}</td>
              </tr>
            );
          })}
        </tbody>
      </table>
      <div className="h-[28px] shrink-0 bg-white" />
      <div className="flex-1 bg-[#f1f1f1]" />
    </section>
  );
}

/* ---------- property editor ---------- */

type Prop = { name: string; indent?: boolean; value?: string; check?: boolean; expand?: boolean; cursor?: boolean };
const props: Prop[] = [
  { name: "Underline", indent: true, check: false },
  { name: "Strikeout", indent: true, check: false },
  { name: "Kerning", indent: true, check: true },
  { name: "Antialiasing", indent: true, value: "PreferDefault" },
  { name: "cursor", value: "Arrow", cursor: true },
  { name: "mouseTracking", check: false },
  { name: "tabletTracking", check: false },
  { name: "focusPolicy", value: "NoFocus" },
  { name: "contextMenuPolicy", value: "DefaultContextMenu" },
  { name: "acceptDrops", check: false },
  { name: "toolTip", expand: true },
  { name: "toolTipDuration", value: "-1" },
  { name: "statusTip", expand: true },
  { name: "whatsThis", expand: true },
  { name: "accessibleName", expand: true },
  { name: "accessibleDescription", expand: true },
  { name: "layoutDirection", value: "LeftToRight" },
  { name: "autoFillBackground", check: false },
  { name: "" },
];

function PropertyEditor() {
  return (
    <section className="flex min-h-0 flex-1 flex-col overflow-hidden">
      <div className="flex h-[36px] shrink-0 items-center bg-[#404142] pl-px pt-px">
        <input aria-label="Filter properties" placeholder="Filter" className="h-8 min-w-0 flex-1 bg-white pl-[3px] text-[18px] outline-none placeholder:text-[#bcbcbc]" />
        <div className="flex w-[112px] items-center pl-2">
          <button aria-label="Add property">
            <svg viewBox="0 0 24 24" className="size-6" aria-hidden="true">
              <path d="M8 2h5v7h7v5h-7v7H8v-7H1V9h7z" fill="#6fd526" stroke="#3f9a12" strokeWidth="0.800" /><path d="M17 16h6l-3 4z" fill="#d0d0d0" />
            </svg>
          </button>
          <button aria-label="Remove property" className="ml-[14px]">
            <svg viewBox="0 0 20 20" className="size-5" aria-hidden="true"><rect x="0" y="8" width="19" height="4" rx="1" fill="#a8494f" /></svg>
          </button>
          <button aria-label="Configure editor" className="ml-[14px]">
            <svg viewBox="0 0 32 30" className="h-6 w-[26px]" aria-hidden="true">
              <path d={wrench} fill="#a4a4a4" stroke="#dcdcdc" strokeWidth="0.900" />
              <path d="M25 18h7l-3.500 5z" fill="#d0d0d0" />
            </svg>
          </button>
        </div>
      </div>
      <div className="flex h-[26px] shrink-0 items-center border-b-2 border-[#c9c9c9] bg-[#ededed] pl-[3px] pt-0.5 text-[18px] leading-none text-[#303030]">progressBar : QProgressBar</div>
      <table className="h-[593px] w-full shrink-0 border-collapse text-[18px] leading-5 text-[#1b1b10]">
        <thead>
          <tr className="h-[28px] bg-[#ebebeb] text-left text-[16px] text-[#3a3a3a]">
            <th className="p-0 pl-[5px] font-normal">Property</th>
            <th className="w-[259px] p-0 font-normal"><div className="border-l border-[#c6c6c6] pl-[6px] leading-[18px]">Value</div></th>
          </tr>
        </thead>
        <tbody>
          {props.map((p, i) => (
            <tr
              key={p.name}
              className={"border-b border-[#dedede] " + (p.check !== undefined || p.cursor ? "h-[31px] " : "h-[28px] ") + (i % 2 ? "bg-[#feffdb]" : "bg-[#ffffb4]")}
            >
              <td className={"border-r border-[#dedede] p-0 " + (p.indent ? "pl-[63px]" : "pl-[9px]")}>
                <span className="flex items-center">
                  {!p.indent && <span className="flex w-[25px]">{p.expand && <Chevron right color="#a8a888" />}</span>}
                  {p.name}
                </span>
              </td>
              <td className="p-0 pl-[7px]">
                {p.check !== undefined ? (
                  <span className="flex pl-1"><Check label={p.name} checked={p.check} /></span>
                ) : (
                  <span className="flex items-center">
                    {p.cursor && (
                      <svg viewBox="0 0 14 22" className="ml-[7px] mr-[20px] h-[22px] w-[14px]" fill="#fff" stroke="#4a4a4a" strokeWidth="1.200" aria-hidden="true">
                        <path d="M1 1v16l4-4 3 7.500 3-1.200L8 12.500h5z" />
                      </svg>
                    )}
                    {p.value}
                  </span>
                )}
              </td>
            </tr>
          ))}
        </tbody>
      </table>
    </section>
  );
}

/* ---------- status bar ---------- */

const outputs: [string, string][] = [
  ["1", "Issues"],
  ["2", "Search Results"],
  ["3", "Application Output"],
  ["4", "Compile Output"],
  ["5", "QML Debugger Console"],
  ["6", "General Messages"],
  ["8", "Test Results"],
];

function StatusBar() {
  return (
    <footer className="flex h-[37px] shrink-0 items-center bg-[#404142] pt-0.5 text-[18px] text-[#e4e4e4]">
      <button aria-label="Toggle left sidebar" className="ml-3">
        <svg viewBox="0 0 16 16" className="size-4" fill="none" aria-hidden="true">
          <rect x="1" y="1" width="14" height="14" stroke="#5c5d5e" strokeWidth="2" /><rect x="1" y="1" width="6" height="14" fill="#6c6d6e" />
        </svg>
      </button>
      <div className="ml-[26px] flex h-[30px] w-[285px] shrink-0 items-center gap-[7px] bg-white pl-[9px]">
        <svg viewBox="0 0 22 22" className="size-[22px] shrink-0" fill="none" stroke="#6a6a6a" strokeWidth="2" aria-hidden="true">
          <circle cx="11" cy="7.500" r="6" /><path d="M7 12L1 19" strokeWidth="2.500" /><path d="M16 17h5l-2.500 3z" fill="#6a6a6a" stroke="none" />
        </svg>
        <input aria-label="Locate" placeholder="Type to locate (⌘K)" className="w-0 min-w-0 flex-1 outline-none placeholder:text-[#bcbcbc]" />
      </div>
      <div className="ml-[5px] h-[30px] w-px bg-[#5c5d5e]" />
      <div className="ml-[13px] flex gap-[23px]">
        {outputs.map(([n, label]) => (
          <button key={n} className="flex gap-[10px]">
            <span>{n}</span>
            <span>{label}</span>
          </button>
        ))}
        <button aria-label="Output panes" className="ml-1"><Updown /></button>
      </div>
      <div className="flex-1" />
      <button aria-label="Progress details" className="flex h-[29px] w-9 items-center justify-center bg-[#262626]">
        <svg viewBox="0 0 20 16" className="h-4 w-5" fill="none" aria-hidden="true">
          <rect x="0" y="9" width="20" height="5" rx="2" fill="#cfcfcf" /><path d="M12 11.500h6" stroke="#444" strokeWidth="1.500" /><path d="M14 4l3-3 3 3z" fill="#cfcfcf" />
        </svg>
      </button>
      <button aria-label="Toggle right sidebar" className="ml-5 mr-[25px]">
        <svg viewBox="0 0 16 16" className="size-4" fill="none" aria-hidden="true">
          <rect x="1" y="1" width="14" height="14" stroke="#58595a" strokeWidth="2" /><rect x="9" y="1" width="6" height="14" fill="#6c6d6e" />
        </svg>
      </button>
    </footer>
  );
}

export default function App() {
  return (
    <div className="flex h-screen bg-[#f4f4f4] pb-[14px] pl-[3px] pr-[9px] pt-[10px] font-['Inter','Liberation_Sans',sans-serif]">
      <Defs />
      <div className="flex min-w-0 flex-1 flex-col overflow-hidden rounded-[16px] shadow-[0_0_2px_rgba(0,0,0,0.4),0_14px_26px_rgba(0,0,0,0.4)]">
        <header className="relative flex h-[39px] shrink-0 items-center justify-center bg-[#f5f5f5] pb-0.5">
          <div className="absolute left-3 flex gap-[11px]">
            <button aria-label="Close" className="size-[18px] rounded-full bg-[#e15d58]" />
            <button aria-label="Minimize" className="size-[18px] rounded-full bg-[#ecb73f]" />
            <button aria-label="Zoom" className="size-[18px] rounded-full bg-[#69c44b]" />
          </div>
          <svg viewBox="0 0 17 20" className="mr-[9px] h-5 w-[17px]" aria-hidden="true">
            <path d="M0.500 0.500h11l5 5v14H0.500z" fill="#efefef" stroke="#dadada" />
            <path d="M3 6h6M3 9h10M3 12h10M3 15h10" stroke="#b5b5b5" strokeWidth="1.500" />
          </svg>
          <h1 className="text-[19px] font-bold text-[#4a4a4a]">demo_pico_datalog_measure.ui [master] - Qt Creator</h1>
        </header>
        <div className="flex min-h-0 flex-1">
          <ModeBar />
          <div className="flex min-w-0 flex-1 flex-col">
            <TopToolbar />
            <div className="flex min-h-0 flex-1">
              <WidgetBox />
              <main className="flex min-w-0 flex-1 flex-col">
                <FormCanvas />
                <ActionEditor />
              </main>
              <aside className="flex w-[574px] shrink-0 flex-col border-l-2 border-[#58595a]">
                <ObjectInspector />
                <PropertyEditor />
              </aside>
            </div>
            <StatusBar />
          </div>
        </div>
      </div>
    </div>
  );
}
